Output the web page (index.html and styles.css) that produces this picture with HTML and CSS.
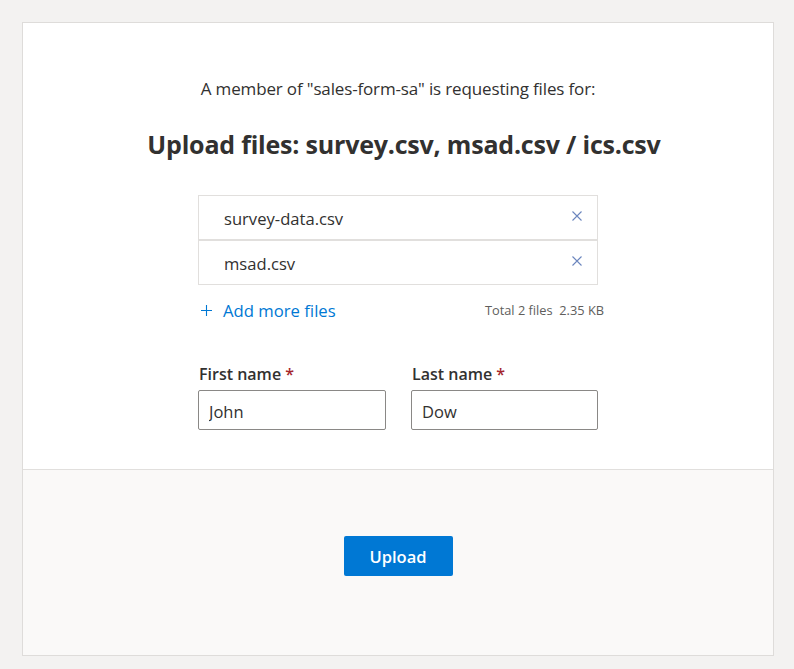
FILE: index.html
```html
<!DOCTYPE html>
<html lang="en">
<head>
<meta charset="utf-8">
<title>Upload files</title>
<link rel="stylesheet" href="styles.css">
</head>
<body>
<div class="card">
  <div class="main">
    <p class="subtitle">A member of "sales-form-sa" is requesting files for:</p>
    <h1 class="title">Upload files: survey.csv, msad.csv / ics.csv</h1>
    <div class="content">
      <ul class="files">
        <li class="file"><span class="file-name">survey-data.csv</span>
          <svg class="remove" width="10" height="10" viewBox="0 0 10 10"><path d="M0.5 0.5L9.5 9.5M9.5 0.5L0.5 9.5" stroke="currentColor" stroke-width="1.1" fill="none"/></svg>
        </li>
        <li class="file"><span class="file-name">msad.csv</span>
          <svg class="remove" width="10" height="10" viewBox="0 0 10 10"><path d="M0.5 0.5L9.5 9.5M9.5 0.5L0.5 9.5" stroke="currentColor" stroke-width="1.1" fill="none"/></svg>
        </li>
      </ul>
      <div class="add-row">
        <a class="add-more" href="#">
          <svg class="plus" width="11" height="11" viewBox="0 0 11 11"><path d="M5.5 0V11M0 5.5H11" stroke="currentColor" stroke-width="1.1" fill="none"/></svg>
          <span>Add more files</span>
        </a>
        <span class="total">Total 2 files&nbsp; 2.35 KB</span>
      </div>
      <div class="names">
        <label class="field">
          <span class="label">First name <span class="req">*</span></span>
          <input class="input" type="text" value="John">
        </label>
        <label class="field">
          <span class="label">Last name <span class="req">*</span></span>
          <input class="input" type="text" value="Dow">
        </label>
      </div>
    </div>
  </div>
  <div class="footer">
    <button class="upload" type="button">Upload</button>
  </div>
</div>
</body>
</html>
```

FILE: styles.css
```css
* { box-sizing: border-box; }
html, body { margin: 0; padding: 0; }
body {
  background: #f3f2f1;
  font-family: "Open Sans", "Noto Sans", sans-serif;
  color: #323130;
  padding: 22px 20px 14px 22px;
}
.card {
  width: 752px;
  background: #ffffff;
  border: 1px solid #dedcda;
}
.main {
  height: 446px;
  padding-top: 55px;
  display: flex;
  flex-direction: column;
  align-items: center;
}
.subtitle {
  margin: 0;
  font-size: 17px;
  line-height: 22px;
  letter-spacing: -0.15px;
}
.title {
  margin: 28px 0 0;
  padding-left: 12px;
  font-size: 25px;
  line-height: 32px;
  font-weight: 700;
  letter-spacing: -0.2px;
}
.content {
  width: 400px;
  margin-top: 35px;
}
.files {
  list-style: none;
  margin: 0;
  padding: 0;
}
.file {
  height: 45px;
  border: 1px solid #e1dfdd;
  display: flex;
  align-items: center;
  justify-content: space-between;
  padding: 0 15px 0 25px;
}
.file-name {
  font-size: 16.6px;
  line-height: 22px;
  margin-top: 3px;
}
.remove {
  color: #6b86be;
  margin-top: -4px;
}
.add-row {
  display: flex;
  align-items: center;
  justify-content: space-between;
  margin-top: 14px;
  margin-right: -6px;
  height: 24px;
}
.add-more {
  display: flex;
  align-items: center;
  color: #0078d4;
  text-decoration: none;
  font-size: 16.7px;
  line-height: 22px;
}
.plus {
  margin-left: 3px;
  margin-right: 11px;
  margin-top: -1px;
}
.total {
  font-size: 12.8px;
  color: #605e5c;
  line-height: 16px;
  margin-top: -3px;
}
.names {
  display: grid;
  grid-template-columns: 188px 187px;
  column-gap: 25px;
  margin-top: 40px;
}
.field {
  display: flex;
  flex-direction: column;
}
.label {
  font-size: 16px;
  line-height: 22px;
  font-weight: 600;
  margin-bottom: 5px;
  padding-left: 1px;
}
.req { color: #a4262c; }
.input {
  height: 40px;
  border: 1px solid #8a8886;
  border-radius: 2px;
  padding: 2px 10px 0;
  font-family: inherit;
  font-size: 16.5px;
  color: #323130;
  background: #fff;
  outline: none;
}
.footer {
  height: 186px;
  background: #faf9f8;
  border-top: 1px solid #e1dfdd;
  display: flex;
  justify-content: center;
  padding-top: 66px;
}
.upload {
  width: 109px;
  height: 40px;
  background: #0078d4;
  color: #fff;
  border: none;
  border-radius: 2px;
  font-family: inherit;
  font-size: 16.5px;
  font-weight: 600;
  padding: 0;
}
```
